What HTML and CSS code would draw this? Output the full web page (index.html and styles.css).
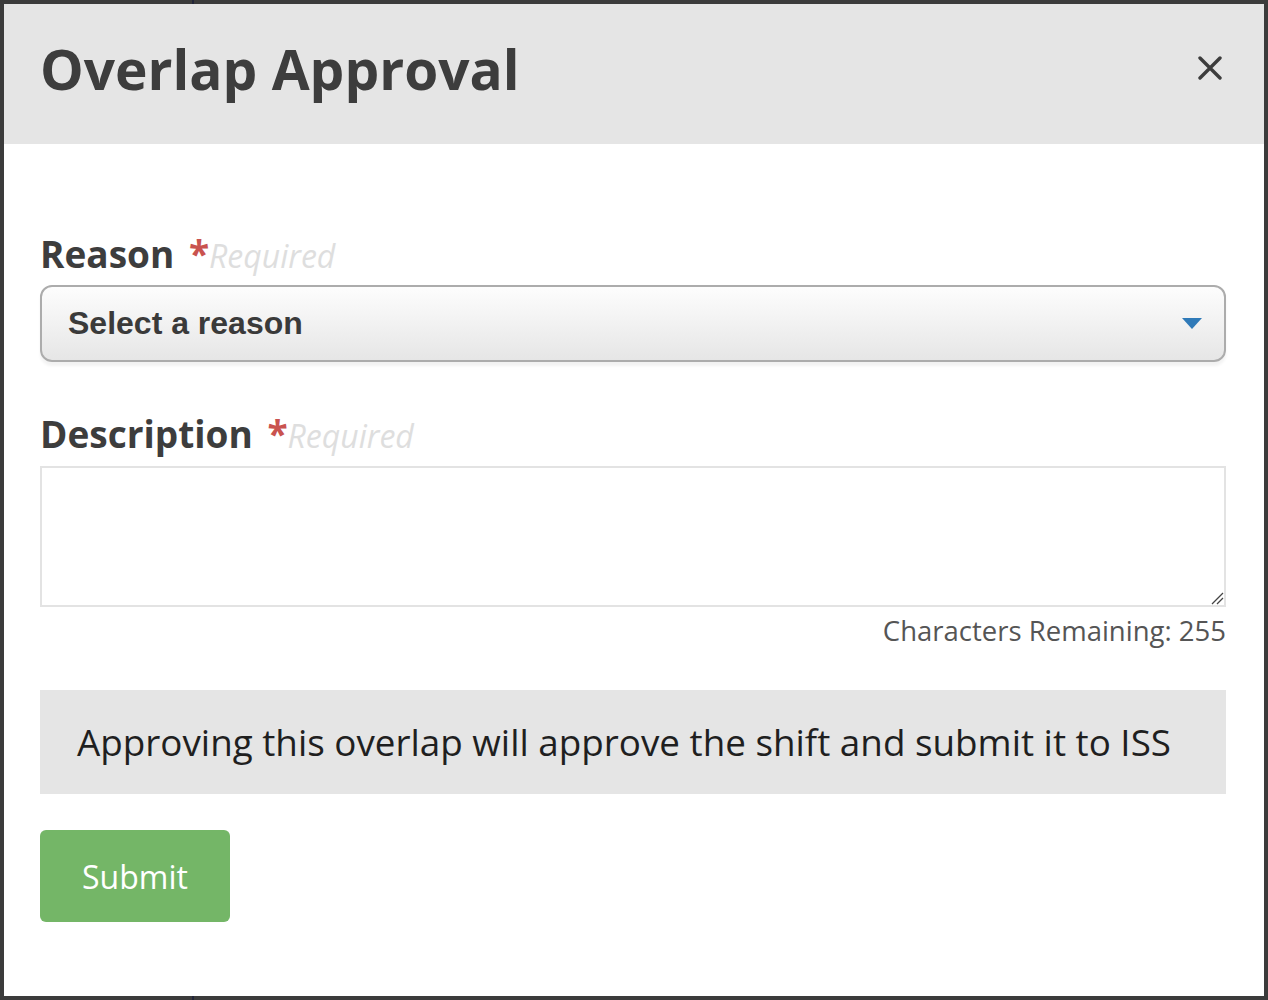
FILE: index.html
```html
<!DOCTYPE html>
<html>
<head lang="en">
    <meta charset="UTF-8">
    <title>Overlap Approval</title>
    <link rel="stylesheet" href="styles.css">
</head>
<body>
<div id="modal">
    <div class="modal-header">
        <h1>Overlap Approval</h1>
        <span class="close">
            <svg width="24" height="24" viewBox="0 0 24 24"><path d="M2 2L22 22M22 2L2 22" stroke="#3d3d3d" stroke-width="3.4" stroke-linecap="round"/></svg>
        </span>
    </div>
    <div class="modal-body">
        <div class="field">
            <label>Reason <span class="star">*</span><span class="req">Required</span></label>
            <div class="select">
                <span>Select a reason</span>
                <svg width="20" height="12" viewBox="0 0 20 12"><path d="M0 0H20L10 11Z" fill="#2f7ab8"/></svg>
            </div>
        </div>
        <div class="field">
            <label>Description <span class="star">*</span><span class="req">Required</span></label>
            <div class="textarea">
                <svg class="grip" width="14" height="14" viewBox="0 0 14 14"><path d="M2 13L13 2M7 13L13 7" stroke="#444" stroke-width="1.3"/></svg>
            </div>
            <div class="count">Characters Remaining: 255</div>
        </div>
        <div class="notice">Approving this overlap will approve the shift and submit it to ISS</div>
        <button class="submit">Submit</button>
    </div>
</div>
</body>
</html>
```

FILE: styles.css
```css
*{
    margin: 0;
    padding: 0;
    box-sizing: border-box;
}
html, body{
    height: 100%;
}
body{
    background: linear-gradient(to right, transparent 192px, #23263a 192px, #23263a 194px, transparent 194px), #3b3b3b;
    padding: 4px;
    font-family: "Open Sans", "Liberation Sans", sans-serif;
}
#modal{
    background: #fff;
    height: 992px;
}
.modal-header{
    height: 140px;
    background: #e5e5e5;
    display: flex;
    align-items: center;
    justify-content: space-between;
    padding: 0 42px 0 36px;
}
.modal-header h1{
    font-size: 55px;
    font-weight: 700;
    color: #3d3d3d;
    line-height: 1;
    margin-top: -12px;
}
.close{
    display: flex;
    margin-top: -12px;
}
.modal-body{
    padding: 88px 38px 0 36px;
}
.field{
    margin-bottom: 50px;
}
.field label{
    display: block;
    font-size: 37px;
    font-weight: 700;
    color: #3d3d3d;
    line-height: 44px;
    margin-bottom: 7px;
}
.field + .field label{
    margin-bottom: 8px;
}
.star{
    color: #c9534f;
    margin-left: 5px;
}
.req{
    font-weight: 400;
    font-style: italic;
    color: #dedede;
    font-size: 32px;
}
.select{
    height: 77px;
    border: 2px solid #acacac;
    border-radius: 12px;
    background: linear-gradient(#fdfdfd, #e6e6e6);
    box-shadow: 0 4px 3px rgba(0,0,0,0.05);
    display: flex;
    align-items: center;
    justify-content: space-between;
    padding: 0 22px 0 26px;
    font-family: "Liberation Sans", Arial, sans-serif;
    font-weight: 700;
    font-size: 32px;
    color: #3a3a3a;
}
.textarea{
    height: 141px;
    border: 2px solid #e3e3e3;
    display: flex;
    align-items: flex-end;
    justify-content: flex-end;
}
.count{
    text-align: right;
    font-size: 27.5px;
    color: #555;
    line-height: 36px;
    margin-top: 6px;
    margin-bottom: -9px;
}
.notice{
    background: #e5e5e5;
    height: 104px;
    display: flex;
    align-items: center;
    padding-left: 37px;
    font-size: 36.8px;
    color: #1f1f1f;
    margin-bottom: 36px;
}
.submit{
    width: 190px;
    height: 92px;
    background: #74b667;
    border: none;
    border-radius: 6px;
    color: #fff;
    font-family: "Open Sans", "Liberation Sans", sans-serif;
    font-size: 32px;
}
```
